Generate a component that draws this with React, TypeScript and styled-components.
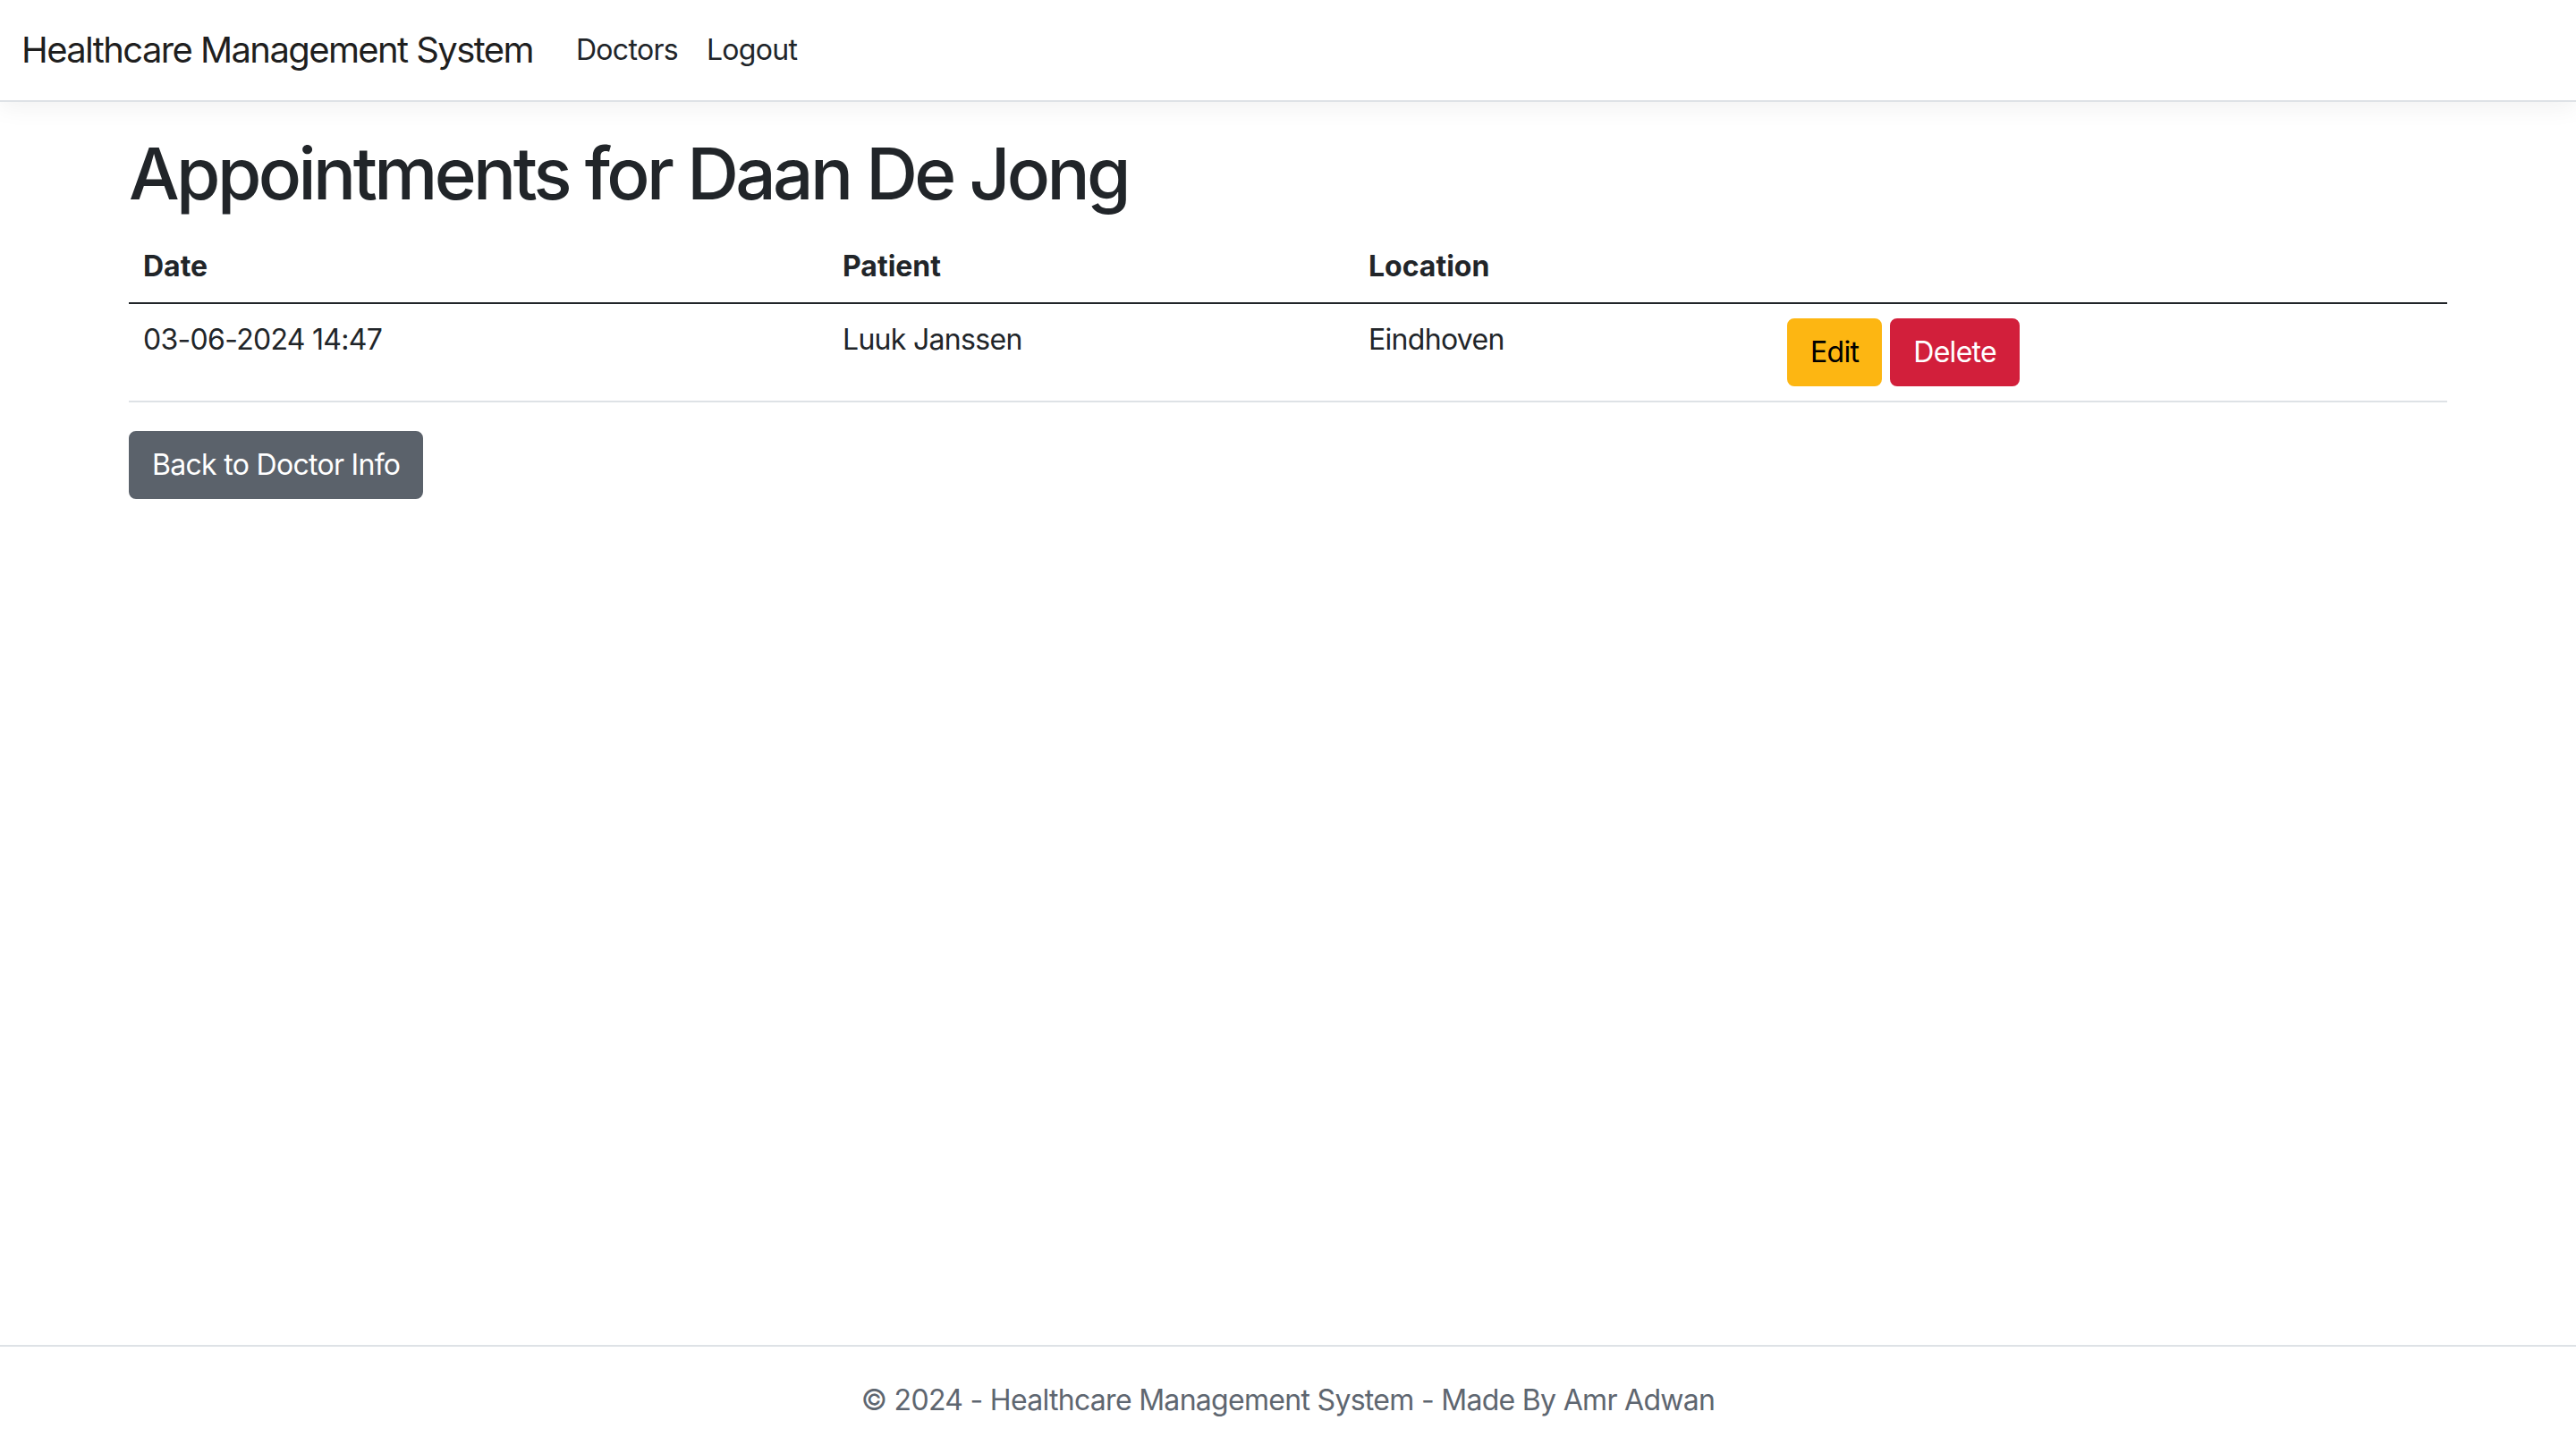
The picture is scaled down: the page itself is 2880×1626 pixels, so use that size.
import React from "react";
import styled, { createGlobalStyle } from "styled-components";

const GlobalStyle = createGlobalStyle`
  html, body {
    margin: 0;
    padding: 0;
  }
  body {
    font-family: Inter, "Noto Sans", "Liberation Sans", sans-serif;
    font-size: 32px;
    line-height: 1.5;
    letter-spacing: -0.7px;
    color: #212529;
    background: #ffffff;
  }
  *, *::before, *::after { box-sizing: border-box; }
`;

const Page = styled.div`
  min-height: 100vh;
  display: flex;
  flex-direction: column;
`;

const NavBar = styled.header`
  display: flex;
  align-items: center;
  padding: 16px 24px;
  border-bottom: 2px solid #dee2e6;
  box-shadow: 0 8px 24px rgba(0, 0, 0, 0.05);
  background: #ffffff;
`;

const Brand = styled.a`
  font-size: 40px;
  line-height: 60px;
  letter-spacing: -1.6px;
  padding: 10px 0;
  margin-right: 32px;
  color: rgba(0, 0, 0, 0.9);
  text-decoration: none;
  white-space: nowrap;
`;

const NavList = styled.nav`
  display: flex;
`;

const NavLink = styled.a`
  display: block;
  padding: 16px 16px;
  line-height: 48px;
  color: #212529;
  text-decoration: none;
`;

const Main = styled.main`
  width: 100%;
  max-width: 2640px;
  margin: 32px auto 0;
  padding: 0 24px 96px;
`;

const Title = styled.h1`
  margin: 0 0 16px;
  font-size: 80px;
  font-weight: 500;
  line-height: 1.2;
  letter-spacing: -3.6px;
`;

const Table = styled.table`
  width: 100%;
  table-layout: fixed;
  border-collapse: collapse;
  margin-bottom: 32px;
  vertical-align: top;
`;

const HeadCell = styled.th<{ $w: number }>`
  width: ${(p) => p.$w}px;
  text-align: left;
  font-weight: 700;
  letter-spacing: 0;
  padding: 16px;
  border-bottom: 2px solid #212529;
`;

const Cell = styled.td`
  padding: 16px;
  vertical-align: top;
  border-bottom: 2px solid #dee2e6;
`;

const Actions = styled.div`
  display: flex;
  gap: 9px;
`;

const Button = styled.button<{ $variant: "warning" | "danger" | "secondary" }>`
  display: inline-block;
  font-family: inherit;
  font-size: 32px;
  line-height: 48px;
  font-weight: 400;
  letter-spacing: -0.7px;
  padding: 12px 24px;
  border-radius: 8px;
  border: 2px solid
    ${(p) =>
      p.$variant === "warning" ? "#fdb612" : p.$variant === "danger" ? "#d21f3b" : "#5b626b"};
  background: ${(p) =>
    p.$variant === "warning" ? "#fdb612" : p.$variant === "danger" ? "#d21f3b" : "#5b626b"};
  color: ${(p) => (p.$variant === "warning" ? "#000000" : "#ffffff")};
  cursor: pointer;
`;

const Footer = styled.footer`
  margin-top: auto;
  border-top: 2px solid #dee2e6;
  line-height: 120px;
  text-align: center;
  color: #5e6670;
  white-space: nowrap;
`;

export default function App() {
  return (
    <Page>
      <GlobalStyle />
      <NavBar>
        <Brand href="#">Healthcare Management System</Brand>
        <NavList>
          <NavLink href="#">Doctors</NavLink>
          <NavLink href="#">Logout</NavLink>
        </NavList>
      </NavBar>
      <Main>
        <Title>Appointments for Daan De Jong</Title>
        <Table>
          <thead>
            <tr>
              <HeadCell $w={782}>Date</HeadCell>
              <HeadCell $w={588}>Patient</HeadCell>
              <HeadCell $w={468}>Location</HeadCell>
              <HeadCell $w={754}></HeadCell>
            </tr>
          </thead>
          <tbody>
            <tr>
              <Cell>03-06-2024 14:47</Cell>
              <Cell>Luuk Janssen</Cell>
              <Cell>Eindhoven</Cell>
              <Cell>
                <Actions>
                  <Button $variant="warning">Edit</Button>
                  <Button $variant="danger">Delete</Button>
                </Actions>
              </Cell>
            </tr>
          </tbody>
        </Table>
        <Button $variant="secondary">Back to Doctor Info</Button>
      </Main>
      <Footer>© 2024 - Healthcare Management System - Made By Amr Adwan</Footer>
    </Page>
  );
}
